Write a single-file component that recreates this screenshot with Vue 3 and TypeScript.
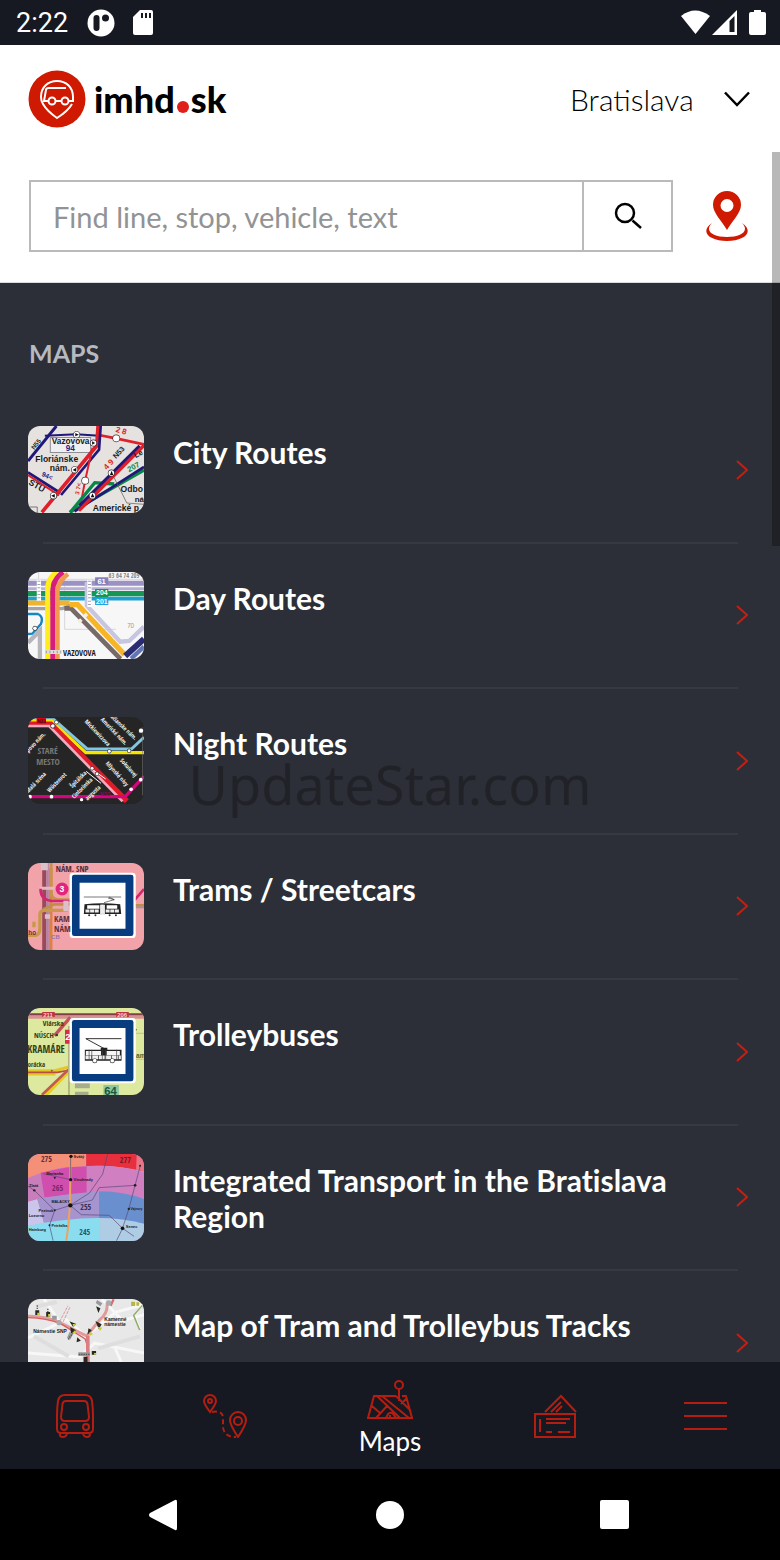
<script setup lang="ts">
import { ref } from 'vue'

interface Shape { d: string; fill?: string; stroke?: string; w?: number; dash?: string; cap?: 'butt' | 'round' }
interface Label { t: string; x: number; y: number; s: number; c?: string; r?: number; wt?: number; narrow?: boolean }
interface MapItem { title: string; box: string; bg: string; shapes: Shape[]; labels: Label[] }

const f = (d: string, fill: string): Shape => ({ d, fill })
const l = (d: string, stroke: string, w: number, dash?: string): Shape => ({ d, stroke, w, dash })
const dot = (x: number, y: number, stroke: string, w: number): Shape => ({ d: `M${x} ${y}h0.1`, stroke, w, cap: 'round' })
const ring = (x: number, y: number, r: number): Shape[] => [dot(x, y, '#333', r * 2 + 3), dot(x, y, '#fff', r * 2 - 1)]
const sign: Shape[] = [
  f('M160 56H340Q350 56 350 66V242Q350 252 340 252H160Q150 252 150 242V66Q150 56 160 56Z', '#fff'),
  f('M164 62H336Q343 62 343 69V239Q343 246 336 246H164Q157 246 157 239V69Q157 62 164 62Z', '#073d80'),
  f('M180 86H319V224H180Z', '#fff'),
]

const items: MapItem[] = [
  {
    title: 'City Routes', box: '24 33 351 261', bg: '#e5e2e0',
    shapes: [
      l('M24 138L110 33', '#211778', 9),
      l('M75 62L170 58L240 62', '#211778', 6),
      l('M238 60L290 70L375 88', '#e0202a', 8),
      f('M90 66H215V114H90Z', '#8d8d94'), f('M93 69H212V111H93Z', '#efeef0'),
      l('M24 172L122 234', '#211778', 8), l('M24 180L118 241', '#df1f29', 6),
      l('M236 33L232 92L66 292', '#df1f29', 11),
      l('M244 33L239 104L124 240', '#211778', 8),
      l('M219 98L197 196L180 285', '#df1f29', 6),
      l('M152 292L226 203L285 207', '#078846', 10),
      l('M150 292L375 165', '#078846', 10),
      l('M165 289L375 156', '#211778', 8),
      l('M180 272L362 93', '#211778', 10),
      l('M178 287L375 91', '#df1f29', 10),
      l('M278 175L323 264L375 268', '#555', 2),
      l('M24 276H52V294', '#444', 2),
      ...ring(171, 59, 9), ...ring(222, 84, 9), ...ring(291, 70, 10), ...ring(165, 164, 9), ...ring(197, 197, 10),
      ...ring(276, 174, 9), ...ring(219, 242, 9), ...ring(101, 242, 9),
      f('M167 54L178 59L167 64ZM218 79L227 84L218 89ZM170 158L159 165L170 170ZM272 180L277 167L282 180ZM214 247L219 235L225 247ZM105 237L94 242L105 248Z', '#111'),
    ],
    labels: [
      { t: 'Vazovova', x: 96, y: 86, s: 25 }, { t: '94', x: 138, y: 109, s: 25, c: '#27208a' },
      { t: 'Floriánske', x: 46, y: 142, s: 26 }, { t: 'nám.', x: 90, y: 167, s: 26 },
      { t: 'N55', x: 43, y: 105, s: 19, r: -52 }, { t: '94<', x: 64, y: 182, s: 20, c: '#27208a', r: 24 },
      { t: 'STU', x: 24, y: 207, s: 26, r: 30 }, { t: '2 8', x: 288, y: 50, s: 24, c: '#df1f29', r: 16 },
      { t: '4 9', x: 262, y: 166, s: 24, c: '#df1f29', r: -46 }, { t: 'N53', x: 290, y: 132, s: 22, r: -46 },
      { t: '207', x: 330, y: 172, s: 23, c: '#078846', r: -28 }, { t: '3 7<', x: 178, y: 240, s: 18, c: '#df1f29', r: -78 },
      { t: 'Le', x: 350, y: 130, s: 23, r: -30 }, { t: 'Odbo', x: 304, y: 231, s: 26 }, { t: 'ná', x: 347, y: 261, s: 24 },
      { t: 'Americké p', x: 220, y: 289, s: 26 },
    ],
  },
  {
    title: 'Day Routes', box: '24 28 351 261', bg: '#f7f7f8',
    shapes: [
      l('M135 28V200H290M56 28V50M24 50H375', '#c7c7cd', 2),
      l('M24 62H375', '#9b91c4', 15), l('M24 78H375', '#b6b0d5', 9),
      l('M24 93H375', '#159652', 16), l('M24 108H375', '#1e9fd0', 11),
      l('M24 121H150', '#eeb42d', 15), l('M24 138H128L154 128', '#a5a3a3', 10),
      l('M134 137L154 137L304 289', '#756a68', 14),
      l('M150 126H174L316 276', '#f7b525', 16),
      l('M202 58V129L303 237L330 235L375 192', '#c7c5df', 13),
      l('M24 154H54Q72 162 63 184L37 213L24 214', '#1686c3', 7),
      l('M24 240L60 204V289', '#b6b5bb', 13),
      l('M318 280L375 229', '#292c72', 18), l('M336 288L375 252', '#6376b4', 13),
      l('M84 289V76Q84 49 111 28', '#ffed20', 16),
      l('M99 289V84Q99 51 130 28', '#d81c7d', 15),
      l('M113 289V88Q113 58 145 34', '#f19a4e', 14),
      l('M57 51V115M210 51V133', '#fff', 13), l('M57 54V115M210 54V133', '#a5a5b0', 9, '3 7'),
      l('M177 179L203 153', '#f3eedd', 11, '12 12'), ...ring(45, 197, 6),
      l('M76 268H126', '#ddd', 12), l('M78 268H124', '#999', 7, '3 8'),
      f('M227 106H267V127H227Z', '#21a5e0'),
      f('M227 44H267V66H227Z', '#8680ba'), f('M227 79H267V103H227Z', '#159652'),
    ],
    labels: [
      { t: '61', x: 234, y: 64, s: 23, c: '#fff' }, { t: '204', x: 230, y: 98, s: 21, c: '#fff' }, { t: '201', x: 230, y: 124, s: 21, c: '#fff' },
      { t: '63 64 74 209', x: 268, y: 46, s: 19, c: '#888', wt: 400, narrow: true }, { t: '70', x: 324, y: 197, s: 19, c: '#999', wt: 400 },
      { t: 'VAZOVOVA', x: 130, y: 280, s: 24, narrow: true },
    ],
  },
  {
    title: 'Night Routes', box: '24 27 351 261', bg: '#252525',
    shapes: [
      l('M24 35H103L203 123H337L375 88', '#83c6df', 9),
      l('M24 39H95L199 134H375', '#f4e400', 10),
      l('M24 49H93L323 280', '#e01a27', 17), l('M24 54H88L310 280', '#f0a9bd', 8),
      l('M24 266H318L375 205', '#d5057e', 10),
      l('M200 190L245 226M210 178L259 213', '#fff', 3),
      l('M371 58V262', '#777', 2),
      f('M50 29H78V46H50Z', '#e0001a'),
      ...ring(99, 54, 6), ...ring(110, 43, 5), ...ring(270, 130, 5), ...ring(330, 128, 5), ...ring(218, 181, 5), ...ring(233, 197, 5),
      dot(30, 266, '#fff', 11), dot(95, 266, '#fff', 11), dot(186, 275, '#fff', 10), dot(336, 244, '#fff', 11), dot(365, 215, '#fff', 11), ...ring(366, 68, 7),
    ],
    labels: [
      { t: 'N33', x: 52, y: 44, s: 14, c: '#55000c' }, { t: 'STARÉ', x: 53, y: 139, s: 27, c: '#777', narrow: true }, { t: 'MESTO', x: 49, y: 171, s: 27, c: '#777', narrow: true },
      { t: 'Mickiewiczova', x: 194, y: 42, s: 18, c: '#eee', r: 46, narrow: true }, { t: 'Americké nám.', x: 243, y: 36, s: 18, c: '#eee', r: 46, narrow: true },
      { t: 'Račianske nám.', x: 266, y: 22, s: 18, c: '#eee', r: 43, narrow: true }, { t: 'Sokolovej', x: 301, y: 158, s: 18, c: '#eee', r: 48, narrow: true },
      { t: 'Mlynské nivy', x: 258, y: 167, s: 18, c: '#eee', r: 48, narrow: true }, { t: 'Župovo nám.', x: 14, y: 146, s: 18, c: '#eee', r: -46, narrow: true },
      { t: 'Malá scéna', x: 25, y: 256, s: 18, c: '#eee', r: -46, narrow: true }, { t: 'Wüstenrot', x: 89, y: 254, s: 18, c: '#eee', r: -45, narrow: true },
      { t: 'Špitálska', x: 158, y: 241, s: 18, c: '#eee', r: -45, narrow: true }, { t: 'Cintorínska', x: 164, y: 273, s: 18, c: '#eee', r: -45, narrow: true },
      { t: 'augusta', x: 204, y: 278, s: 18, c: '#eee', r: -43, narrow: true }, { t: 'N33', x: 242, y: 265, s: 17, c: '#8c0753' },
    ],
  },
  {
    title: 'Trams / Streetcars', box: '24 27 351 261', bg: '#f2a3a9',
    shapes: [
      l('M73 27V288', '#994958', 12), l('M83 27V288', '#b283a5', 8), l('M93 42V288', '#d98246', 10),
      l('M94 27V116Q95 137 117 137H151', '#c9924e', 9),
      l('M70 166L103 151H151M345 154H375', '#bd8f49', 8),
      l('M24 244H48Q60 240 60 224V181Q60 169 76 169H145M42 220V203', '#c8994a', 10),
      l('M59 103H105', '#e8b8c1', 9), l('M62 104Q61 138 97 141H150M345 140L375 105', '#d42472', 8),
      l('M350 160H375', '#a88cab', 5),
      f('M63 27H84V49H63ZM75 181H91V194H75ZM131 140H147V172H131Z', '#dac1c9'),
      dot(127, 105, '#e3247d', 39),
      ...sign,
      l('M193 129H306M266 132L285 137L254 146M285 137L269 129', '#333', 2),
      f('M195 151Q248 145 303 151L306 180H193Z', '#222'), f('M203 154H240V164H203ZM262 154H294V164H262Z', '#fff'),
      f('M242 152H257V183H242Z', '#ddd'), l('M198 171H240M259 171H301M249 152V183', '#eee', 9, '12 2'),
      dot(209, 184, '#333', 6), dot(228, 184, '#333', 6), dot(271, 184, '#333', 6), dot(290, 184, '#333', 6),
    ],
    labels: [
      { t: 'NÁM. SNP', x: 108, y: 54, s: 25, c: '#512b35', narrow: true }, { t: '3', x: 119, y: 114, s: 26, c: '#fff' },
      { t: 'KAM', x: 103, y: 204, s: 26, c: '#60303a', narrow: true }, { t: 'NÁM', x: 103, y: 235, s: 26, c: '#60303a', narrow: true },
      { t: 'ho', x: 25, y: 242, s: 19, c: '#60303a' }, { t: 'CB', x: 94, y: 255, s: 18, c: '#9b6da7' },
    ],
  },
  {
    title: 'Trolleybuses', box: '24 26 351 261', bg: '#dce99f',
    shapes: [
      l('M24 45H375', '#833f48', 7), l('M24 54H375', '#d89191', 8), l('M152 54L104 109', '#c3525b', 10),
      l('M24 214H105L151 202M24 224H107', '#e2c727', 9), l('M24 219H113L151 212', '#b94c43', 5),
      l('M78 287L151 213', '#e6cf13', 10), l('M66 287L146 211', '#c35a52', 8),
      l('M148 80V287', '#b4b37e', 6), l('M24 43L48 27', '#ddd', 6), l('M345 102H375M350 180H375', '#b9c78a', 3),
      f('M136 91H151V133H136Z', '#d52f45'), f('M67 38H105V53H67ZM291 38H329V53H291Z', '#bd3540'),
      f('M166 251H211V267H166ZM166 277H207V287H166Z', '#a6ad8c'), f('M252 257H299V287H252Z', '#91c6a0'),
      dot(111, 107, '#433', 8), dot(96, 214, '#765', 6), dot(351, 91, '#776', 5),
      ...sign,
      l('M199 118H307M199 118L257 149', '#333', 3), f('M244 145H264V151H307V184H196V151H244Z', '#222'),
      f('M199 155H245V168H199ZM262 155H302V168H262Z', '#f5f5f5'), l('M198 174H305', '#eee', 11, '18 2'),
      l('M209 151V182M217 151V182M249 151V182M259 151V182M292 151V182', '#444', 2),
      ...ring(226, 184, 6), ...ring(279, 184, 6),
    ],
    labels: [
      { t: '211', x: 70, y: 53, s: 18, c: '#f3d4ce' }, { t: '206', x: 294, y: 53, s: 18, c: '#f3d4ce' },
      { t: 'Vlárska', x: 69, y: 79, s: 22, c: '#384016', narrow: true }, { t: 'NÚSCH', x: 42, y: 117, s: 23, c: '#384016', narrow: true },
      { t: 'KRAMÁRE', x: 22, y: 162, s: 30, c: '#384016', narrow: true }, { t: 'Horácka', x: 12, y: 202, s: 20, c: '#384016', narrow: true },
      { t: '2', x: 137, y: 123, s: 29, c: '#fff' }, { t: 'am', x: 351, y: 175, s: 20, c: '#55602d' }, { t: '64', x: 255, y: 286, s: 34, c: '#16583b' },
    ],
  },
  {
    title: 'Integrated Transport in the Bratislava Region', box: '24 27 351 261', bg: '#bc9bd2',
    shapes: [
      f('M24 27H200V64Q103 68 24 99Z', '#f49077'), f('M200 27H375V79Q289 58 200 63Z', '#e72f3e'), f('M353 27H375V79L351 74Z', '#e77487'),
      f('M24 99Q95 70 143 66L151 156Q77 162 24 190Z', '#c97dba'), f('M62 83L145 67L202 64V145L74 157Z', '#cf4eae'),
      f('M202 64Q294 57 375 83V161L241 138L202 145Z', '#d07fc0'),
      f('M24 170L52 163L73 234L24 244Z', '#cac6eb'), f('M53 161L151 147L239 139V219L73 239Z', '#a594ce'),
      f('M239 139Q307 138 375 162V238Q309 223 239 219Z', '#698fce'),
      f('M24 243Q128 220 239 219V288H24Z', '#8addef'), f('M239 219Q309 219 375 236V288H239Z', '#aecde4'),
      l('M153 27L151 180L146 242L140 287', '#efa25d', 6),
      l('M24 123L43 136L105 196L89 241L100 287M105 196L152 181L185 209L270 211L310 250L345 274M152 181L219 165L239 128L348 121L364 61M152 181L210 144L250 87L265 27M348 121L329 192L310 250L292 287M153 33V104L70 86', '#56477b', 2),
      dot(152, 181, '#111', 13), dot(153, 104, '#111', 10), dot(154, 34, '#111', 10), dot(43, 136, '#222', 7), dot(105, 98, '#222', 6),
      dot(105, 196, '#222', 6), dot(89, 241, '#222', 6), dot(348, 121, '#222', 8), dot(310, 250, '#111', 11), dot(329, 192, '#222', 7), dot(363, 62, '#222', 6),
    ],
    labels: [
      { t: '275', x: 63, y: 50, s: 24, c: '#632f39', wt: 400, narrow: true }, { t: '277', x: 302, y: 54, s: 24, c: '#741923', wt: 400, narrow: true },
      { t: '265', x: 97, y: 138, s: 24, c: '#792868', wt: 400, narrow: true }, { t: '255', x: 182, y: 195, s: 24, c: '#333057', wt: 400, narrow: true }, { t: '245', x: 179, y: 269, s: 24, c: '#24586d', wt: 400, narrow: true },
      { t: 'Marianka', x: 79, y: 90, s: 12 }, { t: 'Vinohrady', x: 162, y: 109, s: 12 }, { t: 'MALACKY', x: 95, y: 174, s: 11 },
      { t: 'Pezinok', x: 56, y: 201, s: 12 }, { t: 'Zlatá', x: 27, y: 126, s: 12 }, { t: 'Vajnory', x: 334, y: 195, s: 10 },
      { t: 'Senec', x: 320, y: 248, s: 12 }, { t: 'Svätý', x: 162, y: 39, s: 12 }, { t: 'Petržalka', x: 95, y: 245, s: 11 },
      { t: 'Lozorno', x: 26, y: 216, s: 12 }, { t: 'Hainburg', x: 26, y: 257, s: 12 },
    ],
  },
  {
    title: 'Map of Tram and Trolleybus Tracks', box: '24 28 351 261', bg: '#e8e8e8',
    shapes: [
      l('M24 145L140 90L199 140L290 67L375 45M24 190L180 202L226 160L375 190M72 28L118 94M247 28L310 93L375 75M286 172L307 219', '#f7f7f7', 9),
      l('M42 140L147 200M236 176L363 140M51 50L111 37', '#dedede', 12),
      l('M24 80Q74 79 119 98L202 139L242 89Q267 70 263 38', '#e29b9b', 9),
      l('M24 84Q81 86 122 101L197 148Q207 173 208 219', '#d76065', 4),
      l('M205 138V222', '#dc7d82', 11), l('M119 97L145 48M130 97L151 52', '#dd9ba0', 3, '10 3'),
      l('M274 48L283 29', '#d76b72', 7),
      l('M371 47L344 77L362 121', '#8dad6a', 5), l('M371 50L348 77L364 117', '#fff', 2),
      dot(118, 99, '#aaa', 16), dot(268, 40, '#aaa', 16),
      f('M46 62H58V76H46ZM79 67H91V81H79ZM149 95L170 103L161 113ZM152 112L169 122L154 134ZM230 50L243 56L237 70ZM228 94L247 104L238 119ZM207 116L217 122L204 135ZM173 143L184 153L171 158ZM217 184H230V195H217ZM192 201H204V218H192Z', '#29291f'),
      f('M52 69H58V76H52ZM85 73H91V81H85ZM159 103L170 103L161 113ZM166 122L169 130L154 134ZM234 111L249 114L242 124ZM210 128L221 132L213 139ZM224 190H230V195H224Z', '#c9cf36'),
      f('M336 36H348V49H336ZM352 38H360V48H352Z', '#b8b643'),
      f('M97 78H111V90H97ZM233 31L249 41L243 50L229 40ZM150 126L160 134L151 151L142 144ZM176 188H211V199H176Z', '#999'),
      l('M52 47V61M84 57V67M145 149L160 131M178 194H210', '#555', 4, '4 3'),
    ],
    labels: [
      { t: 'Námestie SNP', x: 40, y: 131, s: 15 }, { t: 'Kamenné', x: 255, y: 94, s: 15 }, { t: 'námestie', x: 255, y: 110, s: 15 },
    ],
  },
]

const city = ref('Bratislava')
const query = ref('')
const tabs = ['Departures', 'Journey planner', 'Maps', 'Tickets', 'Menu']
</script>

<template>
  <div class="screen">
    <div class="status">
      <span class="clock">2:22</span>
      <svg class="disc" viewBox="0 0 28 28" aria-hidden="true"><circle cx="14" cy="14" r="13.5" fill="#fff" /><rect x="6.500" y="6" width="6" height="16" rx="3" fill="#161922" /><circle cx="18.500" cy="9" r="3.500" fill="#161922" /></svg>
      <svg class="sd" viewBox="0 0 20 25" aria-hidden="true"><path d="M7 0H18Q20 0 20 2V23Q20 25 18 25H2Q0 25 0 23V7Z" fill="#fff" /><path d="M9 3V8M13 3V8M17 3V8" stroke="#161922" stroke-width="2" /></svg>
      <svg class="signals" viewBox="0 0 86 26" aria-hidden="true">
        <path d="M1 6Q15-5 30 6L15.500 24Z" fill="#fff" />
        <path d="M32 25L57 0V25Z" fill="#fff" /><path d="M49.500 11L54.500 6V22H49.500Z" fill="#161922" />
        <path d="M74 2V0H81V2H84Q86 2 86 4V23Q86 25 84 25H71Q69 25 69 23V4Q69 2 71 2Z" fill="#fff" />
      </svg>
    </div>

    <header class="header">
      <div class="brand-row">
        <a class="brand" href="#" aria-label="imhd.sk">
          <svg class="mark" viewBox="0 0 58 58" aria-hidden="true">
            <circle cx="29" cy="29" r="28.500" fill="#cf1900" />
            <g fill="none" stroke="#fff" stroke-width="2">
              <path d="M15 34Q13 31 13 27C13 17 20 11 29 11S45 17 45 27V31H41M44 34Q40 41 29 48Q19 41 15 34" />
              <path d="M20 31H16L18 20Q18 18 21 18H38M28 31H33" />
              <circle cx="24" cy="31" r="3.500" /><circle cx="37" cy="31" r="3.500" />
            </g>
          </svg>
          <span class="word">imhd<span class="point"></span>sk</span>
        </a>
        <div class="city">
          <select v-model="city" aria-label="City"><option>Bratislava</option></select>
          <svg viewBox="0 0 26 16" aria-hidden="true"><path d="M1 1.500L13 14L25 1.500" fill="none" stroke="#000" stroke-width="2.500" /></svg>
        </div>
      </div>
      <form class="search" @submit.prevent>
        <div class="field">
          <input v-model="query" type="text" aria-label="Search" placeholder="Find line, stop, vehicle, text">
          <button type="submit" aria-label="Search">
            <svg viewBox="0 0 28 28"><g fill="none" stroke="#000" stroke-width="2.500"><circle cx="11" cy="11" r="9" /><path d="M18.500 18.500L27 26" /></g></svg>
          </button>
        </div>
        <button class="locate" type="button" aria-label="Nearby stops">
          <svg viewBox="0 0 42 51"><path fill="#cf1900" fill-rule="evenodd" d="M21 39C16 30 7 22 7 14A14 14 0 0 1 35 14C35 22 26 30 21 39ZM21 8A6.500 6.500 0 1 0 21 21A6.500 6.500 0 1 0 21 8Z" /><path fill="#cf1900" d="M6 32C-7 41 4 50 21 50S49 41 36 32C44 40 35 46 21 46S-2 40 6 32Z" /></svg>
        </button>
      </form>
    </header>

    <main class="content">
      <h1>MAPS</h1>
      <ul class="list">
        <li v-for="item in items" :key="item.title">
          <a href="#">
            <svg class="thumb" :viewBox="item.box" preserveAspectRatio="none" aria-hidden="true">
              <rect x="0" y="0" width="400" height="320" :fill="item.bg" />
              <path v-for="(s, i) in item.shapes" :key="i" :d="s.d" :fill="s.fill ?? 'none'" :stroke="s.stroke" :stroke-width="s.w" :stroke-dasharray="s.dash" :stroke-linecap="s.cap" />
              <text v-for="(t, i) in item.labels" :key="'t' + i" :x="t.x" :y="t.y" :font-size="t.s" :fill="t.c ?? '#191919'" :font-weight="t.wt ?? 700" :class="{ narrow: t.narrow }" :transform="t.r ? `rotate(${t.r} ${t.x} ${t.y})` : undefined">{{ t.t }}</text>
            </svg>
            <span class="title">{{ item.title }}</span>
            <svg class="chevron" viewBox="0 0 12 20" aria-hidden="true"><path d="M1 1L11 10L1 19" fill="none" stroke="#c51f12" stroke-width="2" /></svg>
          </a>
        </li>
      </ul>
    </main>

    <nav class="tabs" aria-label="Main">
      <button v-for="tab in tabs" :key="tab" type="button" :class="{ active: tab === 'Maps' }" :aria-label="tab">
        <svg v-if="tab === 'Departures'" width="38" height="44" viewBox="0 0 38 44">
          <path d="M9 1H29Q35 1 36 7Q37 14 37 22V35Q37 39 33 39H5Q1 39 1 35V22Q1 14 2 7Q3 1 9 1Z" /><path d="M10 7H28Q31 7 31.500 10L33 23Q33 27 29 27H9Q5 27 5 23L6.500 10Q7 7 10 7ZM4 39V41Q4 43 7 43T11 40M27 40Q28 43 31 43T34 40" /><circle cx="8" cy="33" r="3" /><circle cx="30" cy="33" r="3" />
        </svg>
        <svg v-else-if="tab === 'Journey planner'" width="44" height="44" viewBox="0 0 44 44">
          <path d="M7 18Q1 10 1 7A6 6 0 0 1 13 7Q13 10 7 18ZM35 43Q27 31 27 26A8 8 0 0 1 43 26Q43 31 35 43Z" /><circle cx="7" cy="7" r="2" /><circle cx="35" cy="27" r="4" /><path d="M9 18Q20 16 20 24V33Q21 43 33 43" stroke-dasharray="5 3" />
        </svg>
        <svg v-else-if="tab === 'Maps'" width="46" height="40" viewBox="0 0 46 40">
          <circle cx="32" cy="5" r="4" /><path d="M32 9V21M29 16H7L1 38H45L39 16H35M10 16L33 38M15 16L42 38M29 16L44 31M21 25L9 38M5 26L13 33M39 19L34 24M19 38L21 34Q24 31 27 35L29 38M23 35V38" />
        </svg>
        <svg v-else-if="tab === 'Tickets'" width="43" height="44" viewBox="0 0 43 44">
          <path d="M1 20H41V43H1ZM11 18L27 2L42 18M17 18L27 8M22 18L28 12M6 25V38M12 25H36M12 29H32M12 38H18M24 38H36" />
        </svg>
        <svg v-else width="43" height="30" viewBox="0 0 43 30"><path d="M0 2H43M0 15H43M0 28H43" /></svg>
        <span v-if="tab === 'Maps'">{{ tab }}</span>
      </button>
    </nav>

    <div class="system">
      <button type="button" aria-label="Back"><svg viewBox="0 0 32 32"><path d="M26 1Q28 0 28 3V29Q28 32 26 31L1 18Q-1 16 1 14Z" /></svg></button>
      <button type="button" aria-label="Home"><svg viewBox="0 0 32 32"><circle cx="16" cy="16" r="14" /></svg></button>
      <button type="button" aria-label="Recents"><svg viewBox="0 0 32 32"><rect x="1" y="1" width="29" height="29" rx="2" /></svg></button>
    </div>

    <div class="scrollbar" aria-hidden="true"></div>
    <div class="watermark">UpdateStar.com</div>
  </div>
</template>

<style>
body { margin: 0; background: #000; }
</style>

<style scoped>
* { box-sizing: border-box; }
.screen { position: relative; display: flex; flex-direction: column; height: 100vh; overflow: hidden; background: #2c2f37; font-family: Lato, "Open Sans", sans-serif; }
svg { display: block; flex: none; }
button { padding: 0; border: 0; background: none; font: inherit; }
a { color: inherit; text-decoration: none; }

.status { flex: none; display: flex; align-items: center; height: 45px; padding: 0 14px 0 16px; background: #161922; color: #fff; }
.clock { font: 27px Roboto, sans-serif; }
.disc { width: 28px; height: 28px; margin-left: 19px; }
.sd { width: 20px; height: 25px; margin-left: 18px; }
.signals { width: 86px; height: 26px; margin-left: auto; }

.header { flex: none; background: #fff; border-bottom: 1px solid #d9dcdc; padding-bottom: 30px; }
.brand-row { display: flex; align-items: center; justify-content: space-between; height: 107px; padding: 0 30px 0 28px; }
.brand { display: flex; align-items: center; gap: 8px; color: #000; }
.mark { width: 58px; height: 58px; }
.word { font-size: 36px; line-height: 44px; font-weight: 900; }
.point { display: inline-block; width: 12px; height: 12px; margin: 0 2px; border-radius: 50%; background: #e01e1a; }
.city { display: flex; align-items: center; gap: 30px; }
.city select { appearance: none; border: 0; padding: 0; background: none; color: #000; font: 300 30px/40px Lato, sans-serif; }
.city svg { width: 26px; height: 16px; }
.search { display: flex; align-items: center; gap: 33px; margin-top: 28px; padding: 0 32px 0 29px; }
.field { flex: 1; display: flex; height: 72px; border: 2px solid #b9bbbb; }
.field input { flex: 1; min-width: 0; border: 0; outline: 0; padding: 0 22px; background: #fff; color: #222; font: 29px Lato, sans-serif; }
.field input::placeholder { color: #919394; opacity: 1; }
.field button { display: grid; place-items: center; width: 89px; border-left: 2px solid #b9bbbb; }
.field button svg { width: 28px; height: 28px; }
.locate svg { width: 42px; height: 51px; }

.content { flex: 1; min-height: 0; overflow: hidden; }
h1 { margin: 0; padding: 52px 29px 27px; color: #b6b9bf; font-size: 25px; line-height: 36px; font-weight: 700; }
.list { display: grid; grid-template-rows: repeat(7, 1fr); min-height: 1019px; margin: 0; padding: 0; list-style: none; }
.list li { display: flex; flex-direction: column; justify-content: space-between; }
.list li::after { content: ""; height: 2px; margin: 0 42px 0 43px; background: #363942; }
.list a { display: flex; align-items: center; gap: 29px; padding: 28px 32px 0 28px; color: #fff; }
.thumb { width: 116px; height: 87px; border-radius: 12px; font-family: "Liberation Sans", sans-serif; }
.narrow { font-family: "Open Sans Condensed", "Liberation Sans Narrow", "DejaVu Sans Condensed", sans-serif; }
.title { flex: 1; align-self: flex-start; padding-top: 8px; font-size: 30px; line-height: 36px; font-weight: 700; font-variant-ligatures: none; }
.chevron { width: 12px; height: 20px; }

.tabs { flex: none; display: flex; height: 107px; background: #161922; }
.tabs button { flex: 5; display: flex; flex-direction: column; align-items: center; justify-content: center; gap: 4px; color: #fff; font-size: 26px; line-height: 34px; }
.tabs .active { flex: 6; padding-top: 6px; }
.tabs svg { fill: none; stroke: #b51d11; stroke-width: 2; }

.system { flex: none; display: flex; align-items: center; justify-content: center; gap: 193px; height: 91px; background: #000; }
.system svg { width: 32px; height: 32px; fill: #fff; }

.scrollbar { position: absolute; top: 152px; right: 0; width: 8px; height: 394px; background: rgba(0, 0, 0, .28); }
.watermark { position: absolute; top: 748px; left: 0; right: 0; text-align: center; pointer-events: none; color: rgba(20, 21, 22, .45); font: 54px/72px "Noto Sans", sans-serif; }
</style>
